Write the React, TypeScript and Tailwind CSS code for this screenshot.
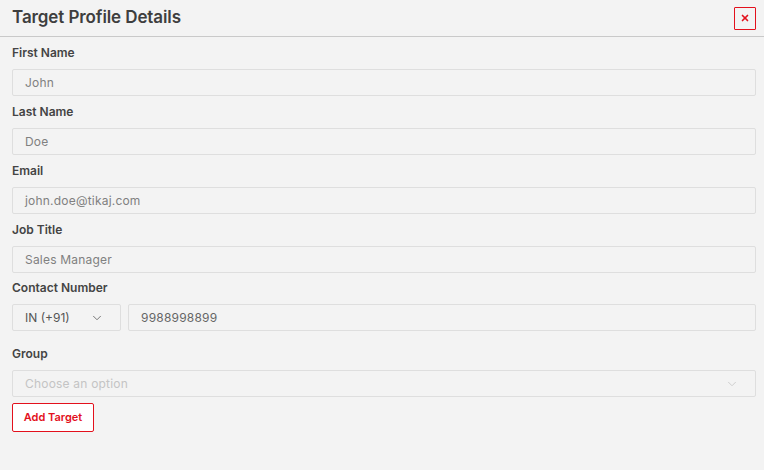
import React from 'react';
import { X, ChevronDown } from 'lucide-react';

const fields = [
  { label: "First Name", value: "John" },
  { label: "Last Name", value: "Doe" },
  { label: "Email", value: "john.doe@tikaj.com" },
  { label: "Job Title", value: "Sales Manager" },
];

const Field = ({ label, value }: { label: string; value: string }) => (
  <div className="flex flex-col">
    <label className="h-4 mb-2 text-[12px] leading-4 font-semibold text-[#444]">{label}</label>
    <div className="h-[27px] border border-[#dedede] rounded-[2px] px-3 flex items-center text-[12px] text-[#808080] tracking-[0.2px]">
      {value}
    </div>
  </div>
);

const App: React.FC = () => {
  return (
    <div
      className="w-[764px] h-[470px] bg-[#f3f3f3] text-[#444]"
      style={{ fontFamily: 'Inter, "Noto Sans", sans-serif' }}
    >
      {/* Header */}
      <div className="h-[37px] border-b border-[#c9c9c9] flex items-center justify-between pl-3 pr-2">
        <h2 className="text-[17px] font-semibold text-[#3e3e3e] tracking-[-0.1px]">Target Profile Details</h2>
        <button className="w-[22px] h-[23px] border border-[#e3101c] rounded-[1px] flex items-center justify-center text-[#e3101c]">
          <X className="w-2.5 h-2.5" strokeWidth={4} />
        </button>
      </div>

      {/* Form */}
      <div className="pl-3 pr-2 pt-2 flex flex-col gap-2">
        {fields.map((f, i) => (
          <Field key={i} label={f.label} value={f.value} />
        ))}

        <div className="flex flex-col -mt-[1px]">
          <label className="h-4 mb-2 text-[12px] leading-4 font-semibold text-[#444]">Contact Number</label>
          <div className="flex gap-[7px]">
            <div className="w-[109px] h-[27px] border border-[#dedede] rounded-[2px] pl-3 pr-4 flex items-center justify-between text-[12px] text-[#555]">
              <span>IN (+91)</span>
              <ChevronDown className="w-3.5 h-3.5 text-[#666]" strokeWidth={1.5} />
            </div>
            <div className="flex-1 h-[27px] border border-[#dedede] rounded-[2px] px-3 flex items-center text-[12px] text-[#666] tracking-[0.2px]">
              9988998899
            </div>
          </div>
        </div>

        <div className="flex flex-col mt-[7px]">
          <label className="h-4 mb-2 text-[12px] leading-4 font-semibold text-[#444]">Group</label>
          <div className="h-[27px] border border-[#dedede] rounded-[2px] pl-3 pr-4 flex items-center justify-between text-[12px] text-[#c4c4c4] tracking-[0.2px]">
            <span>Choose an option</span>
            <ChevronDown className="w-3.5 h-3.5 text-[#c8c8c8]" strokeWidth={1.5} />
          </div>
        </div>

        <div className="-mt-[2px]">
          <button className="w-[82px] h-[29px] bg-white border border-[#e3101c] rounded-[2px] text-[11px] font-semibold text-[#e3101c]">
            Add Target
          </button>
        </div>
      </div>
    </div>
  );
};

export default App;
